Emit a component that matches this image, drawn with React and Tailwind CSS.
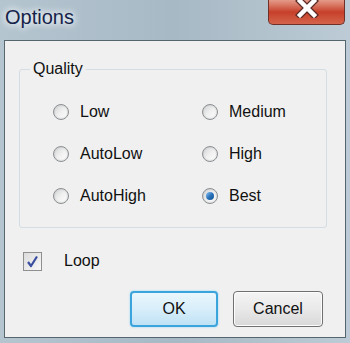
export default function App() {
  const left = ["Low", "AutoLow", "AutoHigh"];
  const right = ["Medium", "High", "Best"];
  const rows = [0, 1, 2].flatMap((i) => [left[i], right[i]]);

  return (
    <div
      className="w-[350px] h-[343px] flex flex-col bg-gradient-to-r from-[#b4c5d0] via-[#a7b9c5] to-[#bccbd5]"
      style={{ fontFamily: '"Liberation Sans", Arial, sans-serif' }}
    >
      {/* title bar */}
      <div className="h-[40px] flex items-start justify-between pl-[5px] pr-[5px]">
        <div className="pt-[5px] text-[20px] leading-[24px] text-[#16244a] [text-shadow:0_0_6px_#ffffff,0_0_10px_#ffffff]">
          Options
        </div>
        <div className="w-[77px] h-[25px] rounded-b-[5px] border border-t-0 border-[#6e3027] bg-gradient-to-b from-[#e39a89] via-[#c63f29] to-[#d5634b] flex justify-center">
          <svg width="26" height="18" viewBox="0 0 26 18">
            <path d="M6 1 L20 15 M20 1 L6 15" stroke="#5a2a24" strokeWidth="7" strokeLinecap="square" />
            <path d="M6 1 L20 15 M20 1 L6 15" stroke="#ffffff" strokeWidth="4.5" strokeLinecap="square" />
          </svg>
        </div>
      </div>

      {/* client area */}
      <div className="flex-1 mx-[4px] mb-[5px] border border-[#56666f] bg-[#f0f0f0] flex flex-col text-[16px] text-[#111]">
        <fieldset className="mt-[19px] ml-[14px] w-[308px] h-[168px] border border-[#d3dde3] rounded-[3px] p-0">
          <legend className="ml-[10px] px-[3px] leading-[18px]">Quality</legend>
          <div className="grid grid-cols-[149px_auto] gap-y-[20px] pl-[33px] pt-[23px]">
            {rows.map((label) => (
              <div key={label} className="h-[22px] flex items-center gap-[11px]">
                <span className="w-[16px] h-[16px] rounded-full border border-[#8c8f91] bg-gradient-to-br from-[#d2d4d6] via-[#f0f0f0] to-[#ffffff] flex items-center justify-center shadow-[inset_0_0_2px_#b9bcbe]">
                  {label === "Best" && (
                    <span className="w-[8px] h-[8px] rounded-full bg-gradient-to-br from-[#8ec5ee] via-[#2a74bd] to-[#134f8c]" />
                  )}
                </span>
                <span className="leading-[20px]">{label}</span>
              </div>
            ))}
          </div>
        </fieldset>

        <div className="mt-[23px] ml-[18px] flex items-center">
          <span className="w-[19px] h-[19px] border border-[#8e8f8f] bg-gradient-to-br from-[#dcdcdc] to-[#f8f8f8] flex items-center justify-center">
            <svg width="13" height="13" viewBox="0 0 13 13">
              <path d="M2 7 L5 11 L11 1.5" stroke="#3b4fa0" strokeWidth="2.2" fill="none" strokeLinejoin="round" />
            </svg>
          </span>
          <span className="ml-[22px] leading-[20px]">Loop</span>
        </div>

        <div className="mt-[20px] mr-[22px] flex justify-end gap-[15px]">
          <button className="w-[88px] h-[36px] rounded-[4px] border-2 border-[#3ba4dc] bg-gradient-to-b from-[#eaf6fc] via-[#d8eefa] to-[#bfe2f5] shadow-[0_0_2px_#7fd0f5] leading-[20px]">
            OK
          </button>
          <button className="w-[90px] h-[36px] rounded-[4px] border border-[#707070] bg-gradient-to-b from-[#f4f4f4] via-[#e9e9e9] to-[#d8d8d8] shadow-[inset_0_0_0_1px_#fcfcfc] leading-[20px]">
            Cancel
          </button>
        </div>
      </div>
    </div>
  );
}
